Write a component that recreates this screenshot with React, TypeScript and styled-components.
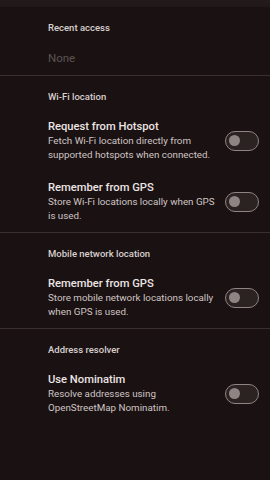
import React from "react";
import styled, { createGlobalStyle } from "styled-components";

const GlobalStyle = createGlobalStyle`
  html, body {
    margin: 0;
    padding: 0;
    background: #1a1212;
  }
  body {
    font-family: Roboto, "Noto Sans", sans-serif;
    -webkit-font-smoothing: antialiased;
  }
`;

const Page = styled.div`
  width: 270px;
  min-height: 480px;
  background: #1a1212;
  display: flex;
  flex-direction: column;
`;

const TopBar = styled.div`
  height: 7px;
  background: linear-gradient(#241b1b, #201818);
`;

const Section = styled.section`
  display: flex;
  flex-direction: column;
`;

const Divider = styled.div`
  height: 1px;
  background: #3a3030;
`;

const SectionHeader = styled.div<{ $top?: number }>`
  padding: ${(p) => p.$top ?? 14}px 16px 6px 48px;
  font-size: 9.5px;
  line-height: 14px;
  font-weight: 500;
  color: #d9cfcf;
`;

const EmptyRow = styled.div`
  padding: 10px 16px 10px 48px;
  font-size: 11.5px;
  line-height: 14px;
  color: #5c5252;
`;

const Item = styled.div`
  display: flex;
  align-items: center;
  padding: 10px 11px 10px 48px;
  gap: 10px;
`;

const ItemText = styled.div`
  flex: 1;
  display: flex;
  flex-direction: column;
`;

const ItemTitle = styled.div`
  font-size: 11.2px;
  line-height: 14px;
  font-weight: 500;
  color: #ede4e4;
`;

const ItemDesc = styled.div`
  font-size: 9.8px;
  line-height: 13.5px;
  color: #cfc4c4;
`;

const Track = styled.div<{ $on?: boolean }>`
  flex: none;
  box-sizing: border-box;
  width: 34px;
  height: 20px;
  border-radius: 10px;
  border: 1.5px solid #8f8484;
  background: #2b2222;
  display: flex;
  align-items: center;
  padding: 0 3px;
  justify-content: ${(p) => (p.$on ? "flex-end" : "flex-start")};
`;

const Thumb = styled.div`
  width: 11px;
  height: 11px;
  border-radius: 50%;
  background: #8f8484;
`;

const Toggle = ({ on }: { on?: boolean }) => (
  <Track $on={on}>
    <Thumb />
  </Track>
);

interface SwitchItemProps {
  title: string;
  desc: string;
}

const SwitchItem = ({ title, desc }: SwitchItemProps) => (
  <Item>
    <ItemText>
      <ItemTitle>{title}</ItemTitle>
      <ItemDesc>{desc}</ItemDesc>
    </ItemText>
    <Toggle />
  </Item>
);

export default function App() {
  return (
    <>
      <GlobalStyle />
      <Page>
        <TopBar />
        <Section>
          <SectionHeader>Recent access</SectionHeader>
          <EmptyRow>None</EmptyRow>
        </Section>
        <Divider />
        <Section>
          <SectionHeader>Wi-Fi location</SectionHeader>
          <SwitchItem
            title="Request from Hotspot"
            desc="Fetch Wi-Fi location directly from supported hotspots when connected."
          />
          <SwitchItem
            title="Remember from GPS"
            desc="Store Wi-Fi locations locally when GPS is used."
          />
        </Section>
        <Divider />
        <Section>
          <SectionHeader>Mobile network location</SectionHeader>
          <SwitchItem
            title="Remember from GPS"
            desc="Store mobile network locations locally when GPS is used."
          />
        </Section>
        <Divider />
        <Section>
          <SectionHeader>Address resolver</SectionHeader>
          <SwitchItem
            title="Use Nominatim"
            desc="Resolve addresses using OpenStreetMap Nominatim."
          />
        </Section>
      </Page>
    </>
  );
}
